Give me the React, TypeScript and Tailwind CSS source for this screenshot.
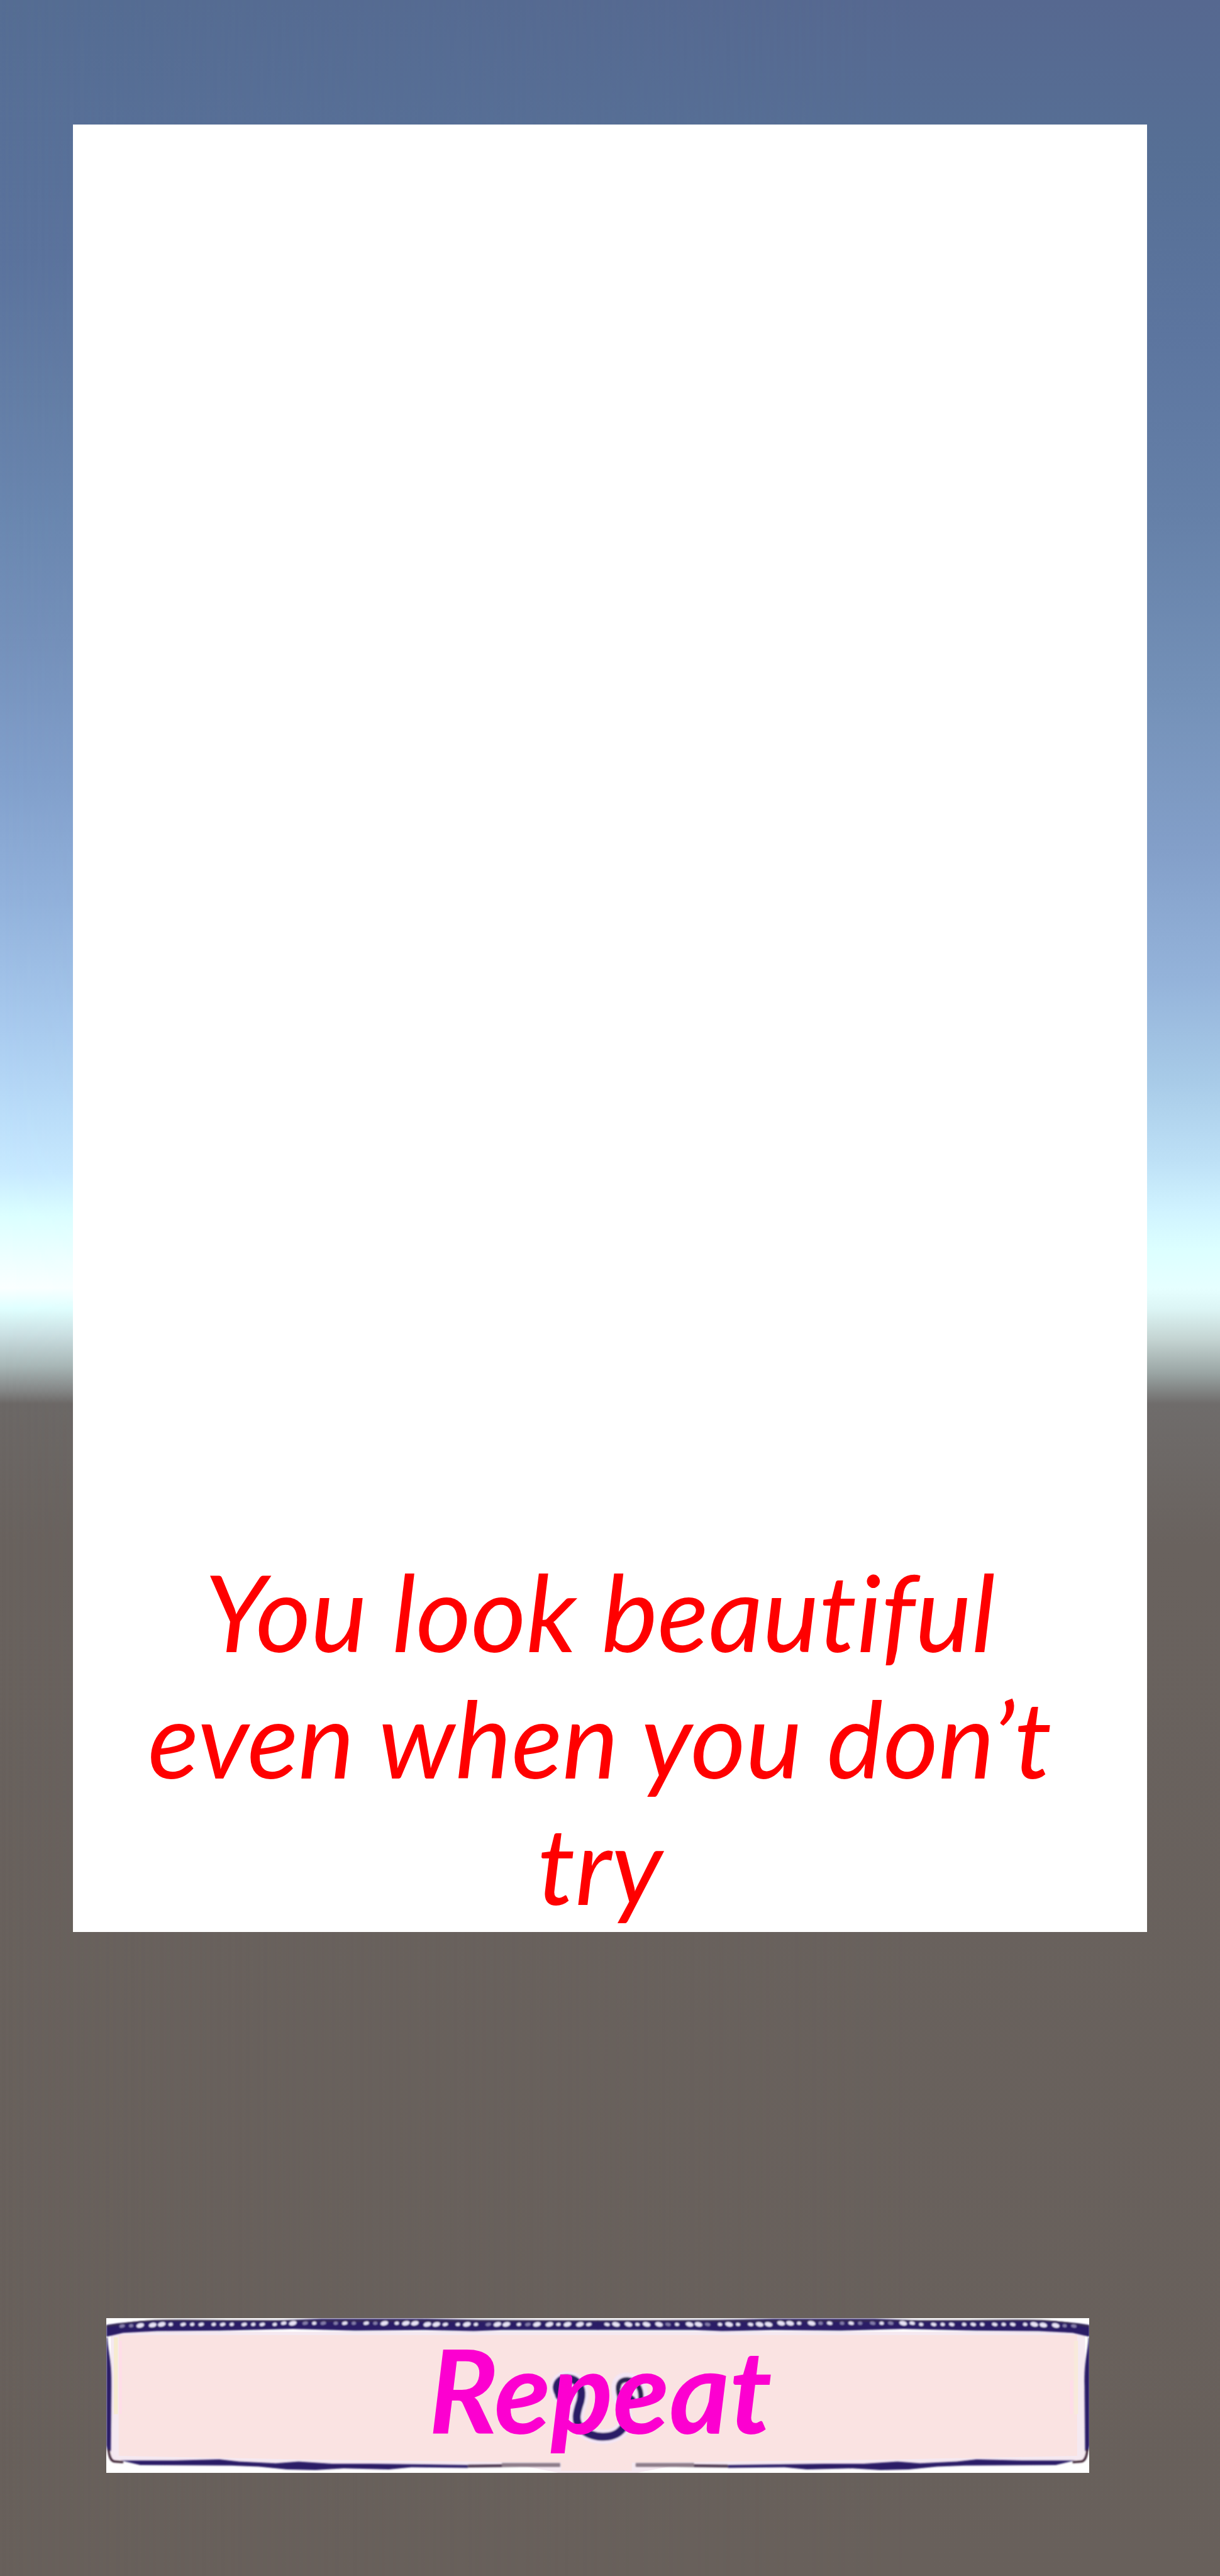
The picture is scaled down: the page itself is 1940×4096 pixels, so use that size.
const INK = "#2a1f66";
const PAPER = "#fae3e2";

const STRONG = [2, 3, 4, 17, 26, 28, 29, 30, 31, 34, 37, 38, 41, 42, 44, 45];
const FAINT = [0, 1, 18, 20, 21, 23, 25, 36, 40];

const beads = Array.from({ length: 47 }, (_, i) => {
  const x = 28 + i * 18 - (i % 3) * 2;
  return {
    x,
    y: x < 90 ? 14 - (x - 28) / 30 : x > 300 && x < 560 ? 9 : 11,
    rx: STRONG.includes(i) ? 7 : i % 2 ? 4 : 5,
    ry: STRONG.includes(i) ? 4 : 3,
    opacity: FAINT.includes(i) ? 0.45 : 0.95,
  };
});

function HalfFrame() {
  return (
    <g>
      <path d="M0 12 L20 9 L60 5 L130 3 L300 4 L380 1 L560 1 L660 3 L871 4 V21 L700 21 L650 23 L560 21 L440 22 L330 19 L200 22 L90 23 L30 26 L0 33 Z" fill={INK} />
      <path d="M0 15 Q28 9 60 6 T130 4 L300 5 L871 5" fill="none" stroke="#3c3148" strokeWidth="2" />
      {beads.map((b) => (
        <ellipse key={b.x} cx={b.x} cy={b.y} rx={b.rx} ry={b.ry} fill="#f3efff" opacity={b.opacity} transform={`rotate(-12 ${b.x} ${b.y})`} />
      ))}
      <path d="M0 34 L2 34 C3 60 10 75 9 120 L8 235 L2 235 L0 225 Z" fill={INK} />
      <path d="M4 232 C5 246 9 254 16 254 L30 255" fill="none" stroke="#3d2434" strokeWidth="4" />
      <path d="M26 252 L120 252 L200 250 L235 254 L300 257 L340 254 L400 258 L470 258 L640 260 L640 265 L540 264 L500 268 L420 266 L370 269 L320 268 L270 263 L220 261 L60 260 Z" fill={INK} />
      <path d="M640 262 L803 260" stroke="#4b3850" strokeWidth="5" />
      <path d="M700 260 L803 260" stroke="#8c7c88" strokeWidth="7" />
    </g>
  );
}

const SWASH = "M802 136 C790 118 803 105 818 107 C838 109 844 128 839 147 C832 168 828 182 840 195 C856 213 898 217 914 195 C925 178 914 158 911 140";
const CURL = "M909 140 C902 118 908 109 922 109 C937 110 947 122 946 142";

function FrameArt() {
  return (
    <svg className="absolute inset-0 h-full w-full" viewBox="0 0 1740 274" preserveAspectRatio="none" aria-hidden="true">
      <defs>
        <filter id="soft" x="-5%" y="-5%" width="110%" height="110%">
          <feGaussianBlur stdDeviation="1" />
        </filter>
      </defs>
      <rect width="1740" height="274" fill="#ffffff" />
      <path d="M8 24 H1732 V252 L1400 258 L1000 262 L940 274 H800 L740 262 L340 258 L8 252 Z" fill="#f5e9f1" />
      <path d="M22 30 H1718 V244 L1400 250 L930 256 V270 H805 V256 L340 250 L22 244 Z" fill={PAPER} />
      <path d="M17 34 V170" stroke="#f6ebcf" strokeWidth="7" />
      <path d="M25 40 V170" stroke="#ffdde8" strokeWidth="5" />
      <path d="M1716 40 V170" stroke="#f8eadb" strokeWidth="7" />
      <path d="M1708 110 V170" stroke="#ffdde8" strokeWidth="5" />
      <g filter="url(#soft)">
        <HalfFrame />
        <g transform="translate(1740 0) scale(-1 1)">
          <HalfFrame />
        </g>
        <g fill="none" strokeLinecap="round">
          <g stroke="#f3e6f6" strokeWidth="25">
            <path d={SWASH} />
            <path d={CURL} />
          </g>
          <path d={SWASH} stroke={INK} strokeWidth="14" />
          <path d={CURL} stroke="#2c2550" strokeWidth="9" />
          <path d="M804 136 L814 142" stroke={INK} strokeWidth="20" />
          <path d="M914 138 L928 146" stroke={INK} strokeWidth="18" />
          <path d="M808 121 L816 118" stroke="#ecebff" strokeWidth="7" />
          <path d="M913 127 L923 123" stroke="#ecebff" strokeWidth="7" />
        </g>
      </g>
    </svg>
  );
}

function Sky() {
  return (
    <div className="absolute inset-0 bg-[linear-gradient(to_bottom,#556d93_0%,#5b739d_10%,#637da5_15%,#6a87b0_20%,#7591bb_25%,#819fcb_30%,#92b2dc_35%,#a9cbef_40%,#b9dcf9_43%,#c8eaff_45.5%,#dcffff_47.2%,#f0ffff_49%,#faffff_50%,#e0ffff_50.8%,#cbe0e3_51.8%,#a9b8b8_53%,#848686_54%,#6c6866_54.5%,#69625e_60%,#68605b_100%)]">
      <div className="h-full w-full bg-[linear-gradient(to_bottom,#566890_0%,#566f95_6%,#5c759f_13%,#6580a8_20%,#7491b8_27%,#839fc9_33%,#94b3da_38%,#a8cbe8_42%,#bde0f6_45%,#d0f3ff_47%,#dcffff_48.5%,#e6ffff_50%,#dcf5f5_50.8%,#c4d4d2_52%,#9aa5a4_53.3%,#6f6c6b_54.5%,#69625e_60%,#68605b_100%)] [mask-image:linear-gradient(to_right,transparent,black_75%)]" />
    </div>
  );
}

export default function App() {
  return (
    <main className="relative grid min-h-screen grid-cols-1 grid-rows-[198fr_2874fr_614fr_246fr_164fr] font-['Lato',sans-serif] italic">
      <Sky />
      <section className="relative row-start-2 mx-[6%] flex flex-col justify-end bg-white pr-32 pb-2 pl-24">
        <p className="text-center text-[169px] leading-[201px] text-[#ff0000] [font-variant-ligatures:none]">You look beautiful even when you don’t try</p>
      </section>
      <button type="button" className="relative row-start-4 ml-[8.7%] flex w-[80.6%] cursor-pointer items-center justify-center overflow-hidden pb-5 pl-2">
        <FrameArt />
        <span className="relative text-[184px] leading-[220px] font-bold text-[#fc00d0] italic">Repeat</span>
      </button>
    </main>
  );
}
